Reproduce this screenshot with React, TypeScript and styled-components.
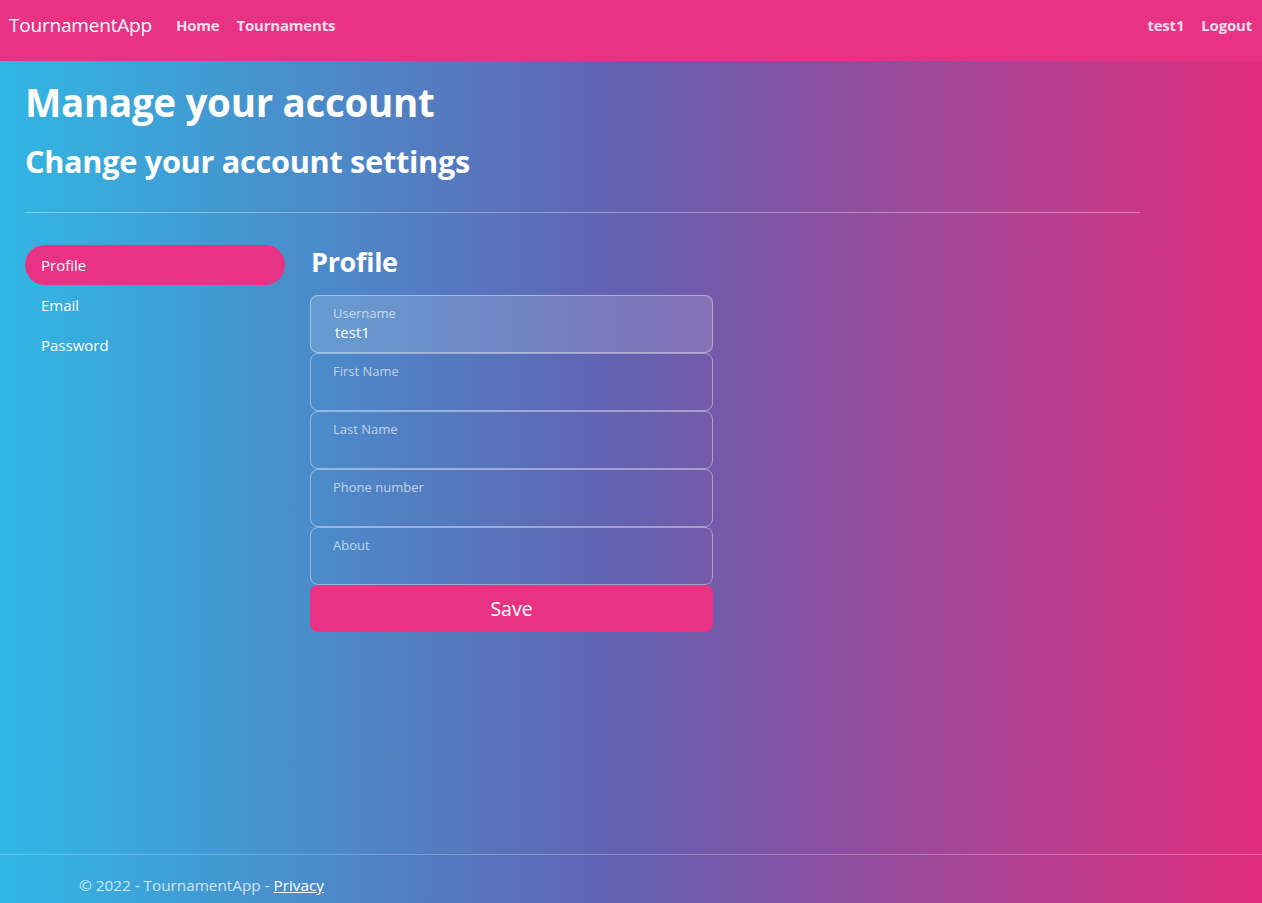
import React from "react";
import styled, { createGlobalStyle } from "styled-components";

const Global = createGlobalStyle`
  html, body { margin: 0; padding: 0; }
  body {
    font-family: "Open Sans", "Noto Sans", sans-serif;
    color: #fff;
  }
  * { box-sizing: border-box; }
`;

const Page = styled.div`
  height: 903px;
  display: flex;
  flex-direction: column;
  overflow: hidden;
`;

const NavBar = styled.header`
  height: 61px;
  flex: none;
  background: #e83283;
  display: flex;
  align-items: center;
  padding: 0 9px 12px;
`;

const Brand = styled.a`
  font-size: 19px;
  color: #fff;
  margin-right: 24px;
  letter-spacing: -0.2px;
`;

const NavLinks = styled.nav`
  display: flex;
  gap: 17px;
  flex: 1;
`;

const NavLink = styled.a`
  font-size: 15px;
  font-weight: 700;
  color: rgba(255, 255, 255, 0.85);
  letter-spacing: -0.2px;
  padding-top: 1px;
`;

const RightLinks = styled.nav`
  display: flex;
  gap: 17px;
  margin-right: 1px;
`;

const Main = styled.main`
  flex: 1;
  display: flex;
  flex-direction: column;
  background: linear-gradient(to right, #31b7e4 0%, #6460b0 50%, #e22e7e 100%);
`;

const Content = styled.div`
  flex: 1;
  padding: 18px 0 0 25px;
  width: 1140px;
`;

const H1 = styled.h1`
  margin: 0;
  font-size: 38.5px;
  font-weight: 700;
  line-height: 1.2;
  letter-spacing: -0.3px;
`;

const H2 = styled.h2`
  margin: 18px 0 0;
  font-size: 30.7px;
  font-weight: 700;
  line-height: 1.2;
  letter-spacing: -0.3px;
`;

const Rule = styled.hr`
  margin: 32px 0 32px;
  border: 0;
  border-top: 1px solid rgba(255, 255, 255, 0.35);
`;

const Columns = styled.div`
  display: flex;
  gap: 25px;
`;

const SideNav = styled.ul`
  list-style: none;
  margin: 0;
  padding: 0;
  width: 260px;
  flex: none;
`;

const Pill = styled.li<{ $active?: boolean }>`
  height: 40px;
  display: flex;
  align-items: center;
  padding: 0 16px;
  border-radius: 20px;
  font-size: 15px;
  background: ${(p) => (p.$active ? "#e83283" : "transparent")};
`;

const FormCol = styled.section`
  width: 403px;
`;

const H3 = styled.h3`
  margin: 1px 0 17px 1px;
  font-size: 27px;
  font-weight: 700;
  line-height: 1.2;
  letter-spacing: -0.3px;
`;

const Field = styled.div<{ $filled?: boolean }>`
  height: 58px;
  border: 1px solid rgba(255, 255, 255, 0.4);
  border-radius: 8px;
  padding: 8px 22px 0;
  background: ${(p) => (p.$filled ? "rgba(255,255,255,0.15)" : "transparent")};
`;

const Label = styled.div`
  font-size: 13px;
  color: rgba(255, 255, 255, 0.65);
  line-height: 18px;
`;

const Value = styled.div`
  font-size: 15px;
  line-height: 20px;
  padding-left: 2px;
`;

const SaveButton = styled.button`
  width: 100%;
  height: 47px;
  border: 0;
  border-radius: 8px;
  background: #e83283;
  color: #fff;
  font-family: inherit;
  font-size: 19.5px;
`;

const Footer = styled.footer`
  height: 49px;
  flex: none;
  border-top: 1px solid rgba(255, 255, 255, 0.25);
  line-height: 60px;
  padding-left: 79px;
  font-size: 15.3px;
  color: rgba(255, 255, 255, 0.75);
  white-space: nowrap;
  overflow: hidden;
`;

const FooterLink = styled.a`
  color: #fff;
  text-decoration: underline;
`;

const fields = [
  { label: "Username", value: "test1" },
  { label: "First Name" },
  { label: "Last Name" },
  { label: "Phone number" },
  { label: "About" },
];

export default function App() {
  return (
    <Page>
      <Global />
      <NavBar>
        <Brand>TournamentApp</Brand>
        <NavLinks>
          <NavLink>Home</NavLink>
          <NavLink>Tournaments</NavLink>
        </NavLinks>
        <RightLinks>
          <NavLink>test1</NavLink>
          <NavLink>Logout</NavLink>
        </RightLinks>
      </NavBar>
      <Main>
        <Content>
          <H1>Manage your account</H1>
          <H2>Change your account settings</H2>
          <Rule />
          <Columns>
            <SideNav>
              <Pill $active>Profile</Pill>
              <Pill>Email</Pill>
              <Pill>Password</Pill>
            </SideNav>
            <FormCol>
              <H3>Profile</H3>
              {fields.map((f) => (
                <Field key={f.label} $filled={!!f.value}>
                  <Label>{f.label}</Label>
                  {f.value && <Value>{f.value}</Value>}
                </Field>
              ))}
              <SaveButton>Save</SaveButton>
            </FormCol>
          </Columns>
        </Content>
        <Footer>
          © 2022 - TournamentApp - <FooterLink>Privacy</FooterLink>
        </Footer>
      </Main>
    </Page>
  );
}
